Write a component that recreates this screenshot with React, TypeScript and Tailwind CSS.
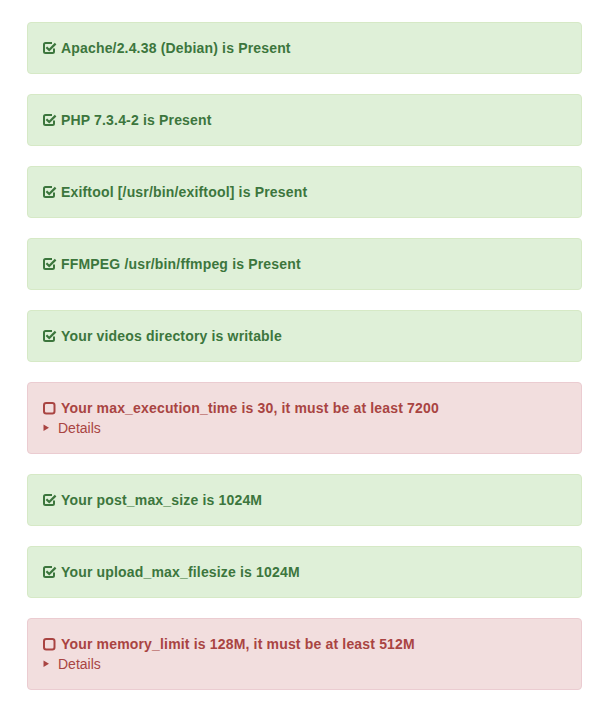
import React from "react";

type Item = { ok: boolean; text: string };

const items: Item[] = [
  { ok: true, text: "Apache/2.4.38 (Debian) is Present" },
  { ok: true, text: "PHP 7.3.4-2 is Present" },
  { ok: true, text: "Exiftool [/usr/bin/exiftool] is Present" },
  { ok: true, text: "FFMPEG /usr/bin/ffmpeg is Present" },
  { ok: true, text: "Your videos directory is writable" },
  { ok: false, text: "Your max_execution_time is 30, it must be at least 7200" },
  { ok: true, text: "Your post_max_size is 1024M" },
  { ok: true, text: "Your upload_max_filesize is 1024M" },
  { ok: false, text: "Your memory_limit is 128M, it must be at least 512M" },
];

function CheckIcon() {
  return (
    <svg width="14" height="14" viewBox="0 0 14 14" className="shrink-0">
      <path
        d="M11 7.5 V10.5 a1.5 1.5 0 0 1 -1.5 1.5 H2.5 a1.5 1.5 0 0 1 -1.5 -1.5 V3.5 a1.5 1.5 0 0 1 1.5 -1.5 H9"
        fill="none"
        stroke="#3c763d"
        strokeWidth="2"
      />
      <path d="M3.4 6.2 L6.2 9 L12.6 2.6" fill="none" stroke="#3c763d" strokeWidth="2.2" />
    </svg>
  );
}

function SquareIcon() {
  return (
    <svg width="13" height="14" viewBox="0 0 13 14" className="shrink-0">
      <rect x="1" y="2" width="10.5" height="10.5" rx="2.2" fill="none" stroke="#a94442" strokeWidth="2" />
    </svg>
  );
}

export default function App() {
  return (
    <div
      className="bg-white min-h-[722px] pl-[27px] pr-[19px] pt-[22px]"
      style={{ fontFamily: '"Liberation Sans", Arial, sans-serif' }}
    >
      {items.map((it, i) =>
        it.ok ? (
          <div
            key={i}
            className="mb-5 rounded-[4px] border border-[#d6e9c6] bg-[#dff0d8] p-[15px] text-[14px] leading-5 text-[#3c763d]"
          >
            <div className="flex items-center gap-[4px] font-bold tracking-[0.17px]">
              <CheckIcon />
              <span>{it.text}</span>
            </div>
          </div>
        ) : (
          <div
            key={i}
            className="mb-5 rounded-[4px] border border-[#ebccd1] bg-[#f2dede] p-[15px] text-[14px] leading-5 text-[#a94442]"
          >
            <div className="flex items-center gap-[5px] font-bold tracking-[0.17px]">
              <SquareIcon />
              <span>{it.text}</span>
            </div>
            <div className="flex items-center">
              <svg width="15" height="20" viewBox="0 0 15 20" className="shrink-0">
                <path d="M0.5 6.5 L6 9.7 L0.5 12.9 Z" fill="#a94442" />
              </svg>
              <span>Details</span>
            </div>
          </div>
        )
      )}
    </div>
  );
}
